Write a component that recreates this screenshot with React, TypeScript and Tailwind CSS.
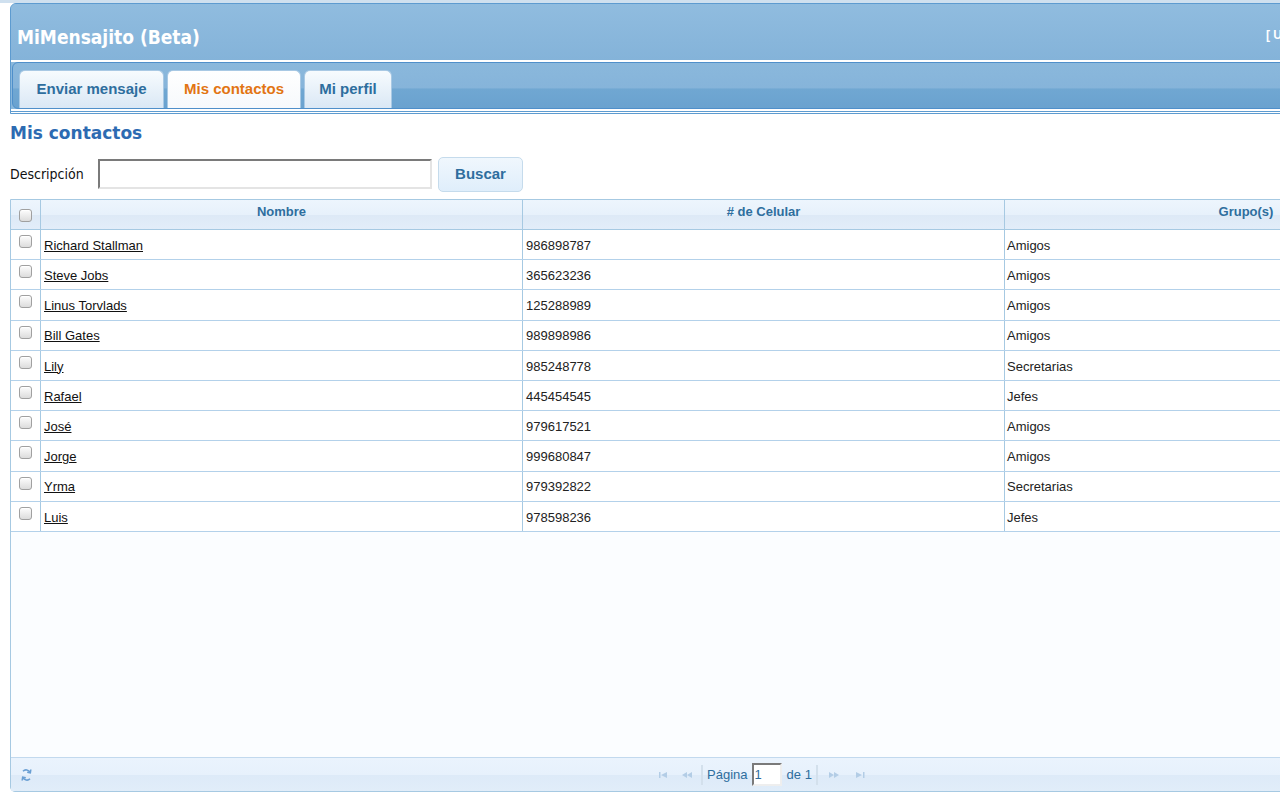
import React from "react";

const contacts = [
  ["Richard Stallman", "986898787", "Amigos"],
  ["Steve Jobs", "365623236", "Amigos"],
  ["Linus Torvlads", "125288989", "Amigos"],
  ["Bill Gates", "989898986", "Amigos"],
  ["Lily", "985248778", "Secretarias"],
  ["Rafael", "445454545", "Jefes"],
  ["José", "979617521", "Amigos"],
  ["Jorge", "999680847", "Amigos"],
  ["Yrma", "979392822", "Secretarias"],
  ["Luis", "978598236", "Jefes"],
];

function Check() {
  return (
    <span className="block w-[13px] h-[13px] rounded-[3px] border border-[#a0a0a0] bg-[linear-gradient(#fdfdfd,#dcdcdc)] shadow-[inset_0_1px_0_#fff]" />
  );
}

function PagerIcon({ kind }: { kind: "first" | "prev" | "next" | "last" }) {
  const c = "#b3cde6";
  return (
    <svg width="14" height="10" viewBox="0 0 14 10">
      {kind === "first" && (
        <g fill={c}>
          <rect x="2" y="2" width="1.5" height="6" />
          <path d="M4 5 L10 2 L10 8 Z" />
        </g>
      )}
      {kind === "prev" && (
        <g fill={c}>
          <path d="M1 5 L6 2 L6 8 Z" />
          <path d="M6 5 L11 2 L11 8 Z" />
        </g>
      )}
      {kind === "next" && (
        <g fill={c}>
          <path d="M2 2 L7 5 L2 8 Z" />
          <path d="M7 2 L12 5 L7 8 Z" />
        </g>
      )}
      {kind === "last" && (
        <g fill={c}>
          <path d="M3 2 L9 5 L3 8 Z" />
          <rect x="10" y="2" width="1.5" height="6" />
        </g>
      )}
    </svg>
  );
}

export default function App() {
  return (
    <div className="w-full h-[800px] overflow-hidden bg-white font-['Liberation_Sans',Arial,sans-serif] text-[13px] text-[#222]">
      <div className="h-[3px] bg-[#cfe0ef]" />
      <div className="pl-[10px]">
        {/* Header */}
        <div className="w-[1320px] border border-[#5d9bd0] rounded-tl-[6px] bg-[#8ab8dc] overflow-hidden">
          <div className="h-[56px] grid grid-cols-[1255px_1fr] items-center bg-[linear-gradient(#90bcdf,#84b3d9)]">
            <div className="pl-[6px] pt-[10px] text-white font-bold text-[19px] font-['DejaVu_Sans_Condensed','DejaVu_Sans',sans-serif] font-stretch-condensed">
              MiMensajito (Beta)
            </div>
            <div className="pt-[6px] text-white font-bold text-[12px] whitespace-nowrap">[ Usuario: admin ]</div>
          </div>
          <div className="border-t-2 border-white" />
          <div className="ml-[1px] border border-[#4f8fca] rounded-l-[6px] h-[47px] bg-[linear-gradient(#8ab8dc_0%,#86b4da_55%,#70a7d2_58%,#6aa2cf_100%)] flex items-end pl-[6px] gap-[3px]">
            <div className="h-[38px] w-[145px] rounded-t-[6px] border border-b-0 border-[#a9c9e4] bg-[linear-gradient(#f7fbfe,#dae8f5)] flex items-center justify-center text-[15px] font-bold text-[#2e6e9e]">
              Enviar mensaje
            </div>
            <div className="h-[38px] w-[134px] rounded-t-[6px] border border-b-0 border-[#a9c9e4] bg-[linear-gradient(#ffffff,#f6f9fc)] flex items-center justify-center text-[15px] font-bold text-[#e27513]">
              Mis contactos
            </div>
            <div className="h-[38px] w-[88px] rounded-t-[6px] border border-b-0 border-[#a9c9e4] bg-[linear-gradient(#f7fbfe,#dae8f5)] flex items-center justify-center text-[15px] font-bold text-[#2e6e9e]">
              Mi perfil
            </div>
          </div>
          <div className="h-[2px] bg-white" />
          <div className="h-[1px] bg-[#5d9bd0]" />
          <div className="h-[1px] bg-white" />
        </div>

        {/* Heading */}
        <div className="mt-[9px] h-[22px] flex items-center text-[17px] font-bold text-[#2d6bb2] font-['DejaVu_Sans',sans-serif]">
          Mis contactos
        </div>

        {/* Search */}
        <div className="mt-[12px] flex items-center h-[34px]">
          <span className="text-[14px] text-[#111] font-['DejaVu_Sans_Condensed','DejaVu_Sans',sans-serif] font-stretch-condensed w-[88px]">
            Descripción
          </span>
          <input className="w-[334px] h-[30px] border-2 border-t-[#7a7a7a] border-l-[#7a7a7a] border-b-[#e4e4e4] border-r-[#e4e4e4] bg-white outline-none" />
          <button className="ml-[6px] w-[85px] h-[35px] rounded-[5px] border border-[#c5dbec] bg-[linear-gradient(#f0f7fd,#dfeefb)] text-[15px] font-bold text-[#2e6e9e]">
            Buscar
          </button>
        </div>

        {/* Grid */}
        <div className="mt-[8px] w-[1500px] h-[593px] border border-[#a6c9e2] rounded-bl-[5px] bg-[#fbfdff] flex flex-col">
          <div className="flex h-[30px] border-b border-[#a6c9e2] bg-[linear-gradient(#edf5fd_0%,#e7f1fb_50%,#dde9f6_51%,#e2edf9_100%)] font-bold text-[#2e6e9e]">
            <div className="w-[30px] border-r border-[#a6c9e2] flex items-center justify-center pt-[2px]">
              <Check />
            </div>
            <div className="w-[482px] border-r border-[#a6c9e2] flex items-center justify-center pb-[5px]">Nombre</div>
            <div className="w-[482px] border-r border-[#a6c9e2] flex items-center justify-center pb-[5px]">
              # de Celular
            </div>
            <div className="w-[482px] flex items-center justify-center pb-[5px]">Grupo(s)</div>
          </div>
          {contacts.map(([n, p, g]) => (
            <div key={n} className="flex h-[30.2px] border-b border-[#b3d1ea] bg-white">
              <div className="w-[30px] border-r border-[#a6c9e2] flex justify-center pt-[5px]">
                <Check />
              </div>
              <div className="w-[482px] border-r border-[#a6c9e2] flex items-center pl-[3px] pt-[2px]">
                <a className="underline text-[#111] cursor-pointer">{n}</a>
              </div>
              <div className="w-[482px] border-r border-[#a6c9e2] flex items-center pl-[3px] pt-[2px]">{p}</div>
              <div className="w-[482px] flex items-center pl-[2px] pt-[2px]">{g}</div>
            </div>
          ))}
          <div className="flex-1" />
          <div className="h-[34px] border-t border-[#c2d9ee] bg-[linear-gradient(#eaf3fd_0%,#e7f1fc_50%,#ddeaf8_51%,#e1edf9_100%)] flex items-center">
            <div className="w-[30px] flex justify-center text-[#6a9fd3]">
              <svg width="13" height="14" viewBox="0 0 13 14" fill="none" stroke="currentColor" strokeWidth="1.6">
                <path d="M10 4.5 A4.3 4.3 0 0 0 3 3.2" />
                <path d="M3 9.5 A4.3 4.3 0 0 0 10 10.8" />
                <path d="M10.8 1.5 L10.3 4.8 L7.2 4.3" />
                <path d="M2.2 12.5 L2.7 9.2 L5.8 9.7" />
              </svg>
            </div>
            <div className="flex-1 flex items-center justify-center text-[#2e6e9e] text-[13px] pl-[4px]">
              <div className="flex items-center gap-[10px] pr-[6px]">
                <PagerIcon kind="first" />
                <PagerIcon kind="prev" />
              </div>
              <div className="w-[2px] h-[20px] bg-[#d3e0ec]" />
              <span className="ml-[4px]">Página</span>
              <input
                readOnly
                value="1"
                className="ml-[4px] w-[30px] h-[23px] border-2 border-t-[#7a7a7a] border-l-[#7a7a7a] border-b-[#eee] border-r-[#eee] bg-white text-[13px] text-[#2e6e9e] pl-[1px] outline-none"
              />
              <span className="ml-[5px]">de 1</span>
              <div className="ml-[4px] w-[2px] h-[20px] bg-[#d3e0ec]" />
              <div className="flex items-center gap-[12px] pl-[9px]">
                <PagerIcon kind="next" />
                <PagerIcon kind="last" />
              </div>
            </div>
            <div className="w-[30px]" />
          </div>
        </div>
      </div>
    </div>
  );
}
